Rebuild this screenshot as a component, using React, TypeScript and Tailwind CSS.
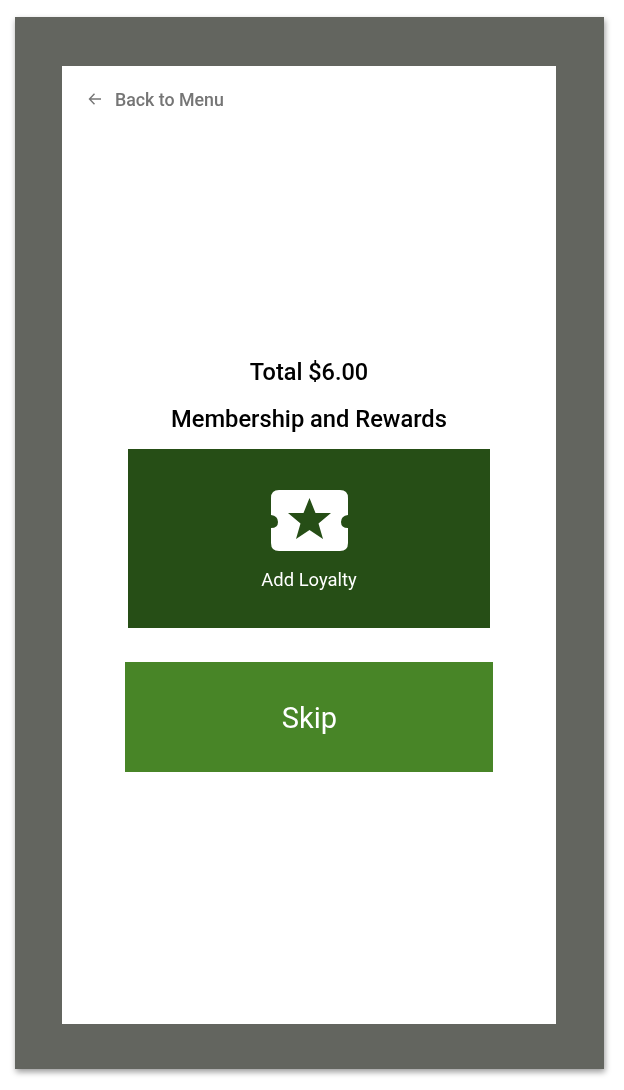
export default function App() {
  return (
    <div className="w-[624px] h-[1090px] bg-white pt-[17px] pl-[15px] font-['Roboto',sans-serif] blur-[0.6px]">
      <div className="w-[589px] h-[1052px] bg-[#63655f] pt-[49px] pl-[47px] shadow-[1px_3px_6px_rgba(0,0,0,0.4)]">
        <div className="w-[494px] h-[958px] bg-white flex flex-col items-center">
          <div className="self-stretch flex items-center pl-[25px] pt-[24px] h-[43px] text-[#757575]">
            <svg width="16" height="16" viewBox="0 0 16 16" fill="none" stroke="currentColor" strokeWidth="1.4" className="-mt-px">
              <path d="M14 8H2.5M7.5 2.8 2.5 8l5 5.2" />
            </svg>
            <span className="ml-[12px] mt-px text-[17.8px] font-medium leading-none">Back to Menu</span>
          </div>
          <div className="mt-[248px] text-[23.5px] font-medium leading-[30px] text-black">Total $6.00</div>
          <div className="mt-[17px] text-[23.7px] font-medium leading-[30px] text-black">Membership and Rewards</div>
          <button className="mt-[15px] w-[362px] h-[179px] bg-[#264e16] flex flex-col items-center text-white">
            <svg className="mt-[41px]" width="77" height="61" viewBox="0 0 77 61" fill="white">
              <path
                fillRule="evenodd"
                d="M8 0H69Q77 0 77 8V25Q70 26 70 32T77 38V53Q77 61 69 61H8Q0 61 0 53V38Q7 38 7 32T0 25V8Q0 0 8 0ZM38.5 8 32.5 23H17L29.5 33.5 25 49 38.5 40 52 49 47.5 33.5 60 23H44.5Z"
              />
            </svg>
            <span className="mt-[18px] text-[18.4px] leading-[22px]">Add Loyalty</span>
          </button>
          <button className="mt-[34px] w-[368px] h-[110px] bg-[#488527] text-white text-[29px] leading-none pt-[3px] pl-px">Skip</button>
        </div>
      </div>
    </div>
  );
}
